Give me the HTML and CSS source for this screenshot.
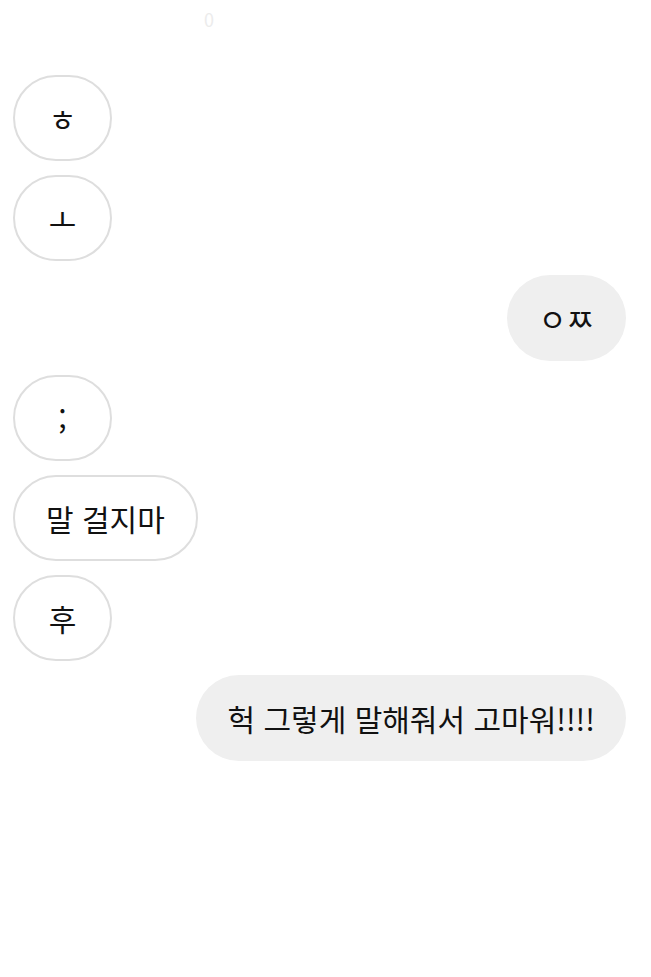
FILE: index.html
```html
<!DOCTYPE html>
<html lang="ko">
<head>
<meta charset="utf-8">
<link rel="stylesheet" href="styles.css">
</head>
<body>
<div class="screen">
  <div class="top"><span class="zero">0</span></div>
  <div class="thread">
    <div class="row in"><div class="bubble jamo">ㅎ</div></div>
    <div class="row in"><div class="bubble jamo">ㅗ</div></div>
    <div class="row out"><div class="bubble jamo">ㅇㅉ</div></div>
    <div class="row in"><div class="bubble">;</div></div>
    <div class="row in"><div class="bubble">말 걸지마</div></div>
    <div class="row in"><div class="bubble">후</div></div>
    <div class="row out"><div class="bubble">헉 그렇게 말해줘서 고마워!!!!</div></div>
  </div>
</div>
</body>
</html>
```

FILE: styles.css
```css
html, body {
  margin: 0;
  padding: 0;
  background: #ffffff;
}
.screen {
  width: 651px;
  height: 977px;
  font-family: "Noto Sans CJK KR", "Noto Sans", sans-serif;
  color: #111111;
}
.top {
  height: 75px;
  box-sizing: border-box;
  padding: 6px 0 0 204px;
}
.zero {
  font-size: 18px;
  line-height: 26px;
  color: #ececec;
}
.thread {
  display: flex;
  flex-direction: column;
  gap: 14px;
  padding: 0 25px 0 13px;
}
.row {
  display: flex;
}
.row.out {
  justify-content: flex-end;
}
.bubble {
  height: 86px;
  min-width: 99px;
  box-sizing: border-box;
  padding: 0 31px;
  border-radius: 43px;
  display: flex;
  align-items: center;
  justify-content: center;
  font-size: 30px;
  white-space: nowrap;
}
.bubble.jamo {
  padding: 0 32px;
}
.in .bubble {
  background: #ffffff;
  border: 2px solid #dedede;
}
.out .bubble {
  background: #efefef;
}
```
